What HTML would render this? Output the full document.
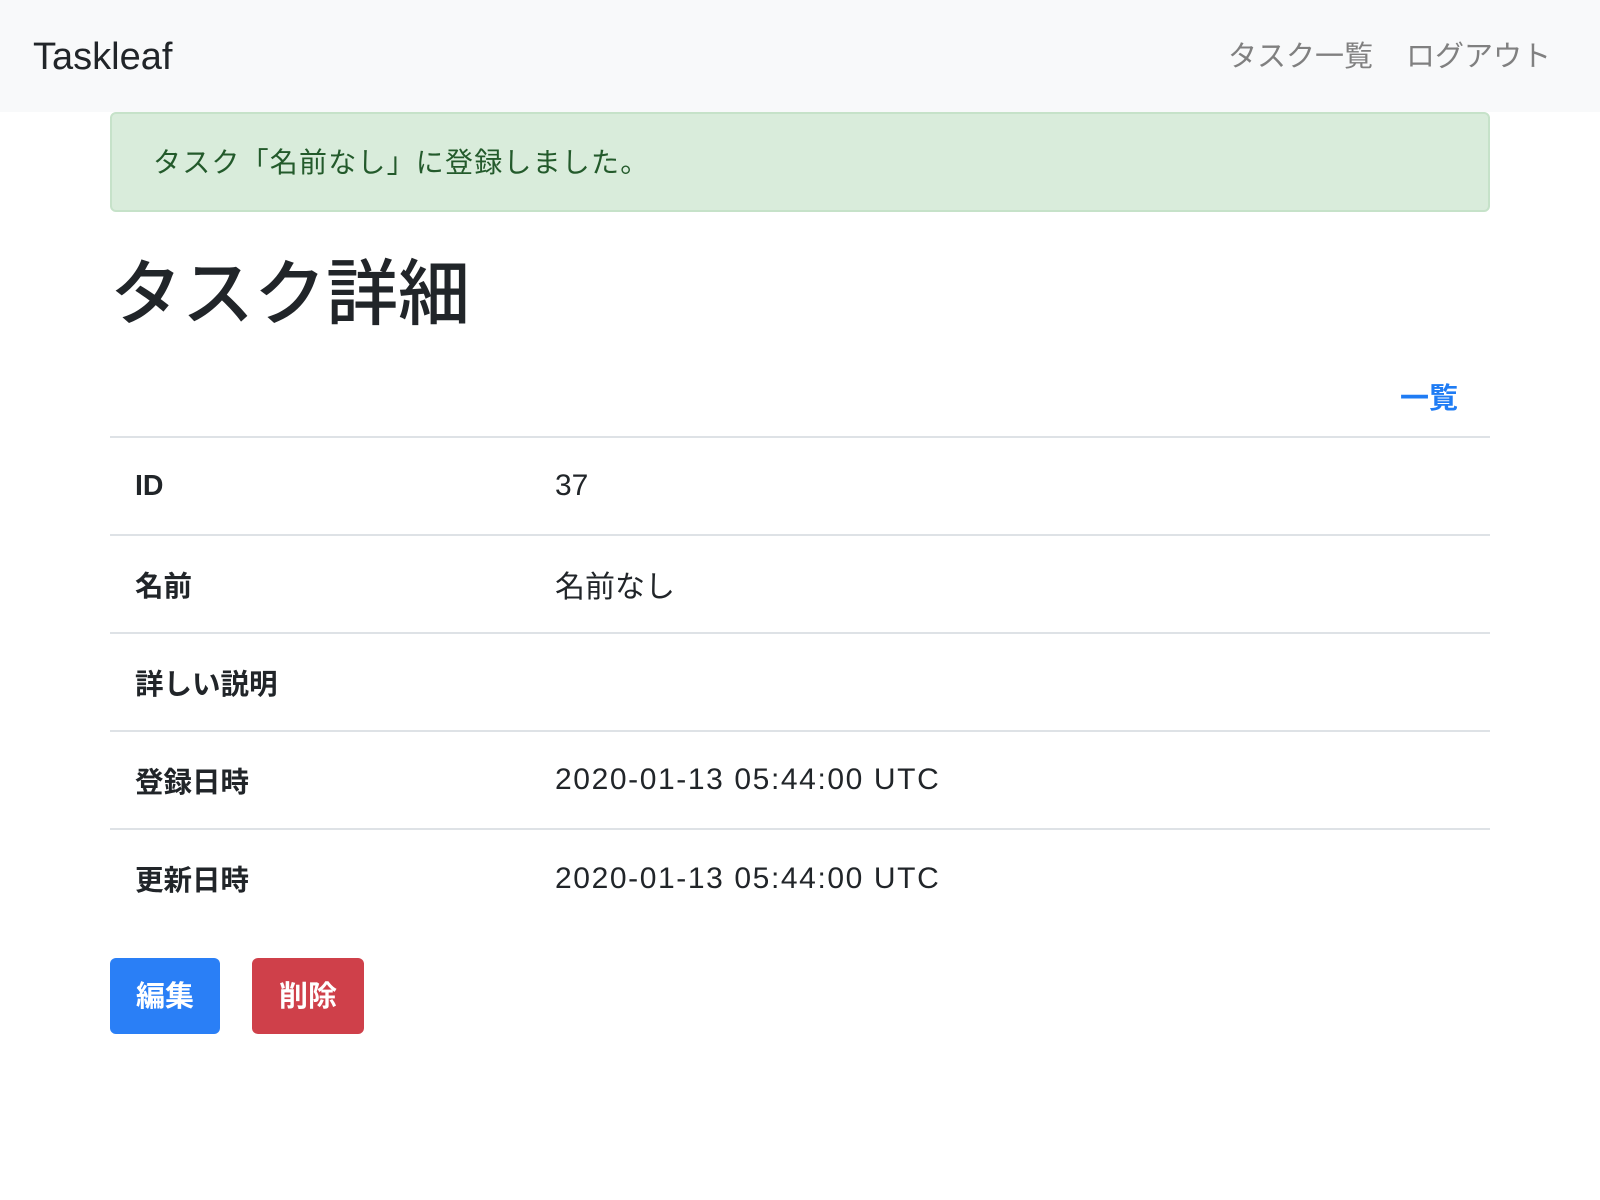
<!DOCTYPE html>
<html><head><meta charset="utf-8"><style>
*{box-sizing:border-box;margin:0;padding:0}
body{width:1600px;height:1200px;background:#fff;font-family:"Liberation Sans","Noto Sans CJK JP",sans-serif;color:#212529;position:relative;overflow:hidden}
.nav{position:absolute;left:0;top:0;width:1600px;height:112px;background:#f8f9fa}
.brand{position:absolute;left:33px;top:35px;font-size:38px;line-height:44px}
.nl{position:absolute;top:39px;font-size:29px;line-height:36px;color:#808080}
.alert{position:absolute;left:110px;top:112px;width:1380px;height:100px;background:#d9ecdb;border:2px solid #c6e2c9;border-radius:6px;color:#235a2b;font-size:28px;padding:29px 41px;line-height:40px;letter-spacing:1.2px}
h1{position:absolute;left:110px;top:250px;font-size:72px;font-weight:500;line-height:90px}
.back{position:absolute;left:1400px;top:380px;font-size:29px;color:#1f7cf4;line-height:38px;font-weight:bold}
table{position:absolute;left:110px;top:436px;width:1380px;border-collapse:collapse;font-size:30px}
td{height:98px;border-top:2px solid #dee2e6;padding:0 25px;vertical-align:middle}
td.l{font-weight:bold;width:420px;font-size:28.5px}
td.d{letter-spacing:1.6px}
.btn{position:absolute;top:958px;height:76px;border-radius:6px;color:#fff;font-size:29px;line-height:78px;text-align:center;font-weight:bold}
</style></head><body>
<div class="nav"><div class="brand">Taskleaf</div>
<div class="nl" style="left:1228px">タスク一覧</div><div class="nl" style="left:1406px">ログアウト</div></div>
<div class="alert">タスク「名前なし」に登録しました。</div>
<h1>タスク詳細</h1>
<div class="back">一覧</div>
<table>
<tr><td class="l">ID</td><td>37</td></tr>
<tr><td class="l">名前</td><td>名前なし</td></tr>
<tr><td class="l">詳しい説明</td><td></td></tr>
<tr><td class="l">登録日時</td><td class="d">2020-01-13 05:44:00 UTC</td></tr>
<tr><td class="l">更新日時</td><td class="d">2020-01-13 05:44:00 UTC</td></tr>
</table>
<div class="btn" style="left:110px;width:110px;background:#2a7ff6">編集</div>
<div class="btn" style="left:252px;width:112px;background:#cf404a">削除</div>
</body></html>
